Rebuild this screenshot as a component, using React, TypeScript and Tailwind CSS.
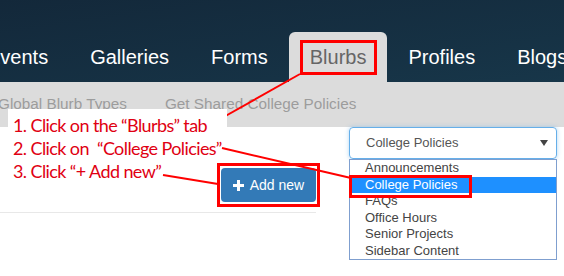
import React from "react";

const navItems = ["Events", "Galleries", "Forms", "Blurbs", "Profiles", "Blogs"];
const options = ["Announcements", "College Policies", "FAQs", "Office Hours", "Senior Projects", "Sidebar Content"];

export default function App() {
  return (
    <div className="relative w-[564px] h-[276px] overflow-hidden bg-white font-['Liberation_Sans',Arial,sans-serif]">
      {/* top nav */}
      <div className="h-[82px] flex items-end overflow-hidden bg-gradient-to-br from-[#13283a] to-[#173649]">
        <div className="flex ml-[-34px] whitespace-nowrap">
          {navItems.map((item) => (
            <div
              key={item}
              className={
                item === "Blurbs"
                  ? "h-[50px] px-[21px] flex items-center text-[20px] bg-[#dcdcdc] text-[#666] rounded-t-[6px]"
                  : "h-[50px] px-[21px] flex items-center text-[20px] text-white"
              }
            >
              {item}
            </div>
          ))}
        </div>
      </div>

      {/* sub nav */}
      <div className="h-[45px] bg-[#dcdcdc] flex items-center gap-[38px] ml-[-2px] text-[15.3px] text-[#9c9c9c] whitespace-nowrap">
        <span>Global Blurb Types</span>
        <span>Get Shared College Policies</span>
      </div>

      {/* content */}
      <div className="flex items-start">
        <div className="w-[316px] pt-[41px] flex flex-col items-end">
          <button className="h-[34px] w-[95px] bg-[#337ab7] rounded-[4px] text-white text-[14px] flex items-center justify-center gap-[6px]">
            <svg width="11" height="11" viewBox="0 0 11 11">
              <path d="M4 0h3v4h4v3H7v4H4V7H0V4h4z" fill="white" />
            </svg>
            <span>Add new</span>
          </button>
          <div className="mt-[10px] w-full border-t border-[#e8e8e8]" />
        </div>
        <div className="ml-[33px] w-[208px] relative">
          <div className="h-[32px] border border-[#66afe9] rounded-[4px] shadow-[0_0_4px_rgba(102,175,233,0.5)] flex items-center justify-between pl-[16px] pr-[8px] text-[13px] text-[#555]">
            <span>College Policies</span>
            <svg width="8" height="6" viewBox="0 0 8 6">
              <path d="M0 0h8L4 6z" fill="#444" />
            </svg>
          </div>
          <div className="absolute top-full left-0 w-[208px] border border-[#7f9fcf] bg-white">
            {options.map((o) => (
              <div
                key={o}
                className={
                  o === "College Policies"
                    ? "h-[16.5px] leading-[16.5px] pl-[15px] text-[13px] bg-[#1e90ff] text-white"
                    : "h-[16.5px] leading-[16.5px] pl-[15px] text-[13px] text-[#444]"
                }
              >
                {o}
              </div>
            ))}
          </div>
        </div>
      </div>

      {/* annotations */}
      <svg className="absolute inset-0 pointer-events-none" width="564" height="276">
        <line x1="213" y1="123" x2="300" y2="74" stroke="#f00" strokeWidth="2" />
        <line x1="222" y1="148" x2="351" y2="178" stroke="#f00" strokeWidth="2" />
        <line x1="163" y1="175" x2="218" y2="184" stroke="#f00" strokeWidth="2" />
      </svg>
      <div className="absolute left-[300px] top-[40px] w-[77px] h-[35px] border-[3px] border-[#f00]" />
      <div className="absolute left-[217px] top-[163px] w-[103px] h-[44px] border-[3px] border-[#f00]" />
      <div className="absolute left-[349px] top-[175px] w-[123px] h-[23px] border-[3px] border-[#f00]" />

      <div className="absolute left-[8px] top-[109px] w-[219px] h-[18px] bg-white" />
      <div className="absolute left-[13px] top-[113.5px] text-[#e00012] text-[18px] leading-[23px] tracking-[-0.6px] font-['Lato',sans-serif] whitespace-pre">
        <div>1. Click on the “Blurbs” tab</div>
        <div>2. Click on  “College Policies”</div>
        <div>3. Click “+ Add new”</div>
      </div>
    </div>
  );
}
